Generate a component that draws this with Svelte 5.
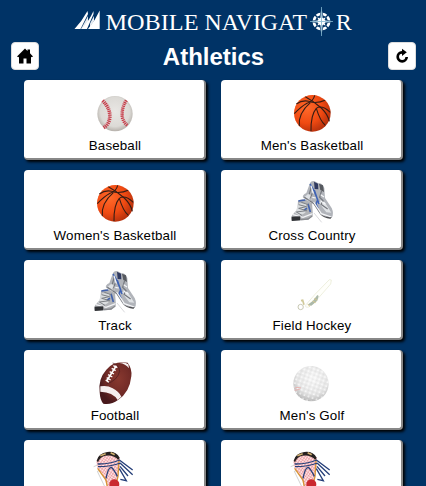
<script lang="ts">
  type Sport = { name?: string; icon: string };

  const sports: Sport[] = [
    { name: "Baseball", icon: "baseball" },
    { name: "Men's Basketball", icon: "basketball" },
    { name: "Women's Basketball", icon: "basketball" },
    { name: "Cross Country", icon: "shoes" },
    { name: "Track", icon: "shoes" },
    { name: "Field Hockey", icon: "hockey" },
    { name: "Football", icon: "football" },
    { name: "Men's Golf", icon: "golf" },
    { icon: "lacrosse" },
    { icon: "lacrosse" },
  ];
</script>

<div class="page">
  <header>
    <svg class="logo" width="280" height="32" viewBox="74 6 280 32" role="img" aria-label="Mobile Navigator">
      <g fill="#fff">
        <path d="M74.500 29 Q82 21 87.500 11 L88 14 L80.500 29Z" />
        <path d="M81.500 29 Q89 21 93.500 11 V14 L87 29Z" />
        <path d="M88 29 Q95 21 99.700 10.500 V29Z" />
        <path d="M84 23.500 L88 16 V22 L84.500 29 H81Z" opacity=".9" />
        <path d="M90 23.500 L94 16 V21 L90 27Z" opacity=".9" />
      </g>
      <text x="105.500" y="30" textLength="93" lengthAdjust="spacingAndGlyphs">MOBILE</text>
      <text x="204.500" y="30" textLength="102.500" lengthAdjust="spacingAndGlyphs">NAVIGAT</text>
      <text x="335.700" y="30">R</text>
      <circle cx="321.500" cy="21.500" r="7.600" fill="none" stroke="#fff" stroke-width="2.800" />
      <path d="M314 14 L329 29 M329 14 L314 29" stroke="#036" stroke-width="1.300" />
      <path d="M321.500 6.500 L323 18 L326 17 L325 20 L333.500 21.500 L325 23 L326 26 L323 25 L321.500 36 L320 25 L317 26 L318 23 L309.500 21.500 L318 20 L317 17 L320 18Z" fill="#fff" stroke="#036" stroke-width=".7" />
      <path d="M321.500 7 V21.500 H333 M321.500 36 V21.500 H310" fill="none" stroke="#7fb3cd" stroke-width=".8" />
    </svg>
    <div class="bar">
      <button aria-label="Home">
        <svg width="16" height="16" viewBox="0 0 16 16">
          <path d="M0 8.500 L8 .5 L10.500 3 V1.500 H13 V5.300 L16 8.500 L14.700 9.300 L14 8.700 V15.500 H9.500 V10.500 H6.500 V15.500 H2 V8.700 L1.300 9.300Z" />
        </svg>
      </button>
      <h1>Athletics</h1>
      <button aria-label="Refresh">
        <svg width="16" height="16" viewBox="0 0 16 16">
          <path d="M8.800 4.300 H8 A4.500 4.500 0 1 0 12.700 9" fill="none" stroke="#000" stroke-width="2.700" />
          <path d="M8 .8 L12.800 4.300 L8 8Z" />
        </svg>
      </button>
    </div>
  </header>

  <main>
    {#each sports as sport}
      <div class="card">
        <svg class="icon" width="60" height="50" viewBox="0 0 180 150">
          {#if sport.icon === "baseball"}
            <circle cx="90" cy="77" r="53" fill="url(#leather)" />
            <g fill="none">
              <path d="M53 38 Q80 65 73 96 Q69 111 56 119" stroke="#d2a2a5" stroke-width="3" />
              <path d="M53 38 Q80 65 73 96 Q69 111 56 119" stroke="#c83846" stroke-width="11" stroke-dasharray="3.500 2.500" />
              <path d="M124 37 Q109 60 112 88 Q116 104 128 113" stroke="#d2a2a5" stroke-width="3" />
              <path d="M124 37 Q109 60 112 88 Q116 104 128 113" stroke="#c83846" stroke-width="10" stroke-dasharray="3.500 2.500" />
            </g>
          {:else if sport.icon === "basketball"}
            <circle cx="91" cy="76" r="55" fill="url(#orange)" />
            <g fill="none" stroke="#351c14" stroke-width="3.200">
              <path d="M70 26 Q96 40 118 60 Q138 80 142 100" />
              <path d="M98 22 Q94 40 75 46 Q57 56 37 77" />
              <path d="M43 48 Q65 32 90 43 Q113 45 129 37" />
              <path d="M85 44 Q48 76 52 114" />
              <path d="M145 73 Q119 49 103 61 Q86 80 87 130" />
              <path d="M103 61 Q114 98 130 112" />
            </g>
          {:else if sport.icon === "shoes"}
            <path d="M84 15 Q89 7 98 10 L109 16 Q120 13 127 30 L129 60 L149 90 Q157 108 149 119 Q133 119 112 106 L93 76 L63 59 Q60 51 73 45Z" fill="#b1b4ba" />
            <path d="M78 48 L68 57 L84 66 L91 55Z M109 72 L133 103 L148 104 L128 72Z" fill="#dfe2e5" />
            <path d="M96 11 L108 17 L109 34 L98 33Z" fill="#303a60" />
            <path d="M111 17 L123 22 L126 42 L115 36Z" fill="#56595f" />
            <path d="M84 18 L96 38 L107 65 L102 78 L108 91 M97 37 L111 78" fill="none" stroke="#3e62b4" stroke-width="4.500" />
            <path d="M88 27 L82 48 M91 45 L84 64 M67 58 L96 77 L114 104 M119 37 L113 58 L123 68 L117 79 L137 93" fill="none" stroke="#74777d" stroke-width="3.500" />
            <path d="M87 23 L94 47 M91 58 L101 60 M116 50 L126 57 M115 68 L130 78 M95 72 L118 107 L148 117" fill="none" stroke="#f6f7f9" stroke-width="3.500" />
            <path d="M111 106 Q133 120 149 117 L146 122 Q128 123 111 106Z" fill="#4d4e52" />
            <path d="M48 69 Q54 62 72 65 L90 75 L93 112 L79 125 L32 129 Q24 122 31 111 L46 94Z" fill="#b1b3b7" />
            <path d="M51 76 L73 76 L70 104 L54 113 L39 105Z" fill="#dadddf" />
            <path d="M49 69 L70 66 M78 77 L85 102 M65 97 L75 91" fill="none" stroke="#4262ad" stroke-width="5" />
            <path d="M50 80 L73 86 L50 91 L74 98 L43 102 L60 112 M58 73 L79 80" fill="none" stroke="#7d8084" stroke-width="3" />
            <path d="M33 110 L63 118 L92 107" fill="none" stroke="#f2f3f5" stroke-width="4" />
            <path d="M29 116 L55 115 L55 127 L29 129Z" fill="#303235" />
            <path d="M57 125 L78 123 L91 114" fill="none" stroke="#898b8f" stroke-width="4" />
            <path d="M96 105 L119 133 M75 67 L90 65 L83 59" fill="none" stroke="#c5c5ca" stroke-width="2" />
          {:else if sport.icon === "hockey"}
            <path d="M148 36 L142 35 L99 79 L72 110 Q67 120 80 117 L104 96 L146 48Z" fill="#fffffb" stroke="#e5e7ce" stroke-width="2" />
            <path d="M106 81 L93 98 L77 110 L88 113 L106 98 L110 84Z" fill="#acb9a9" />
            <path d="M92 99 L101 104 M97 91 L105 97 M77 109 L84 115" stroke="#d9c88e" stroke-width="3" />
            <path d="M57 98 L62 97 L66 110" fill="none" stroke="#d0c998" stroke-width="5" />
            <circle cx="56" cy="117" r="8" fill="#fff" stroke="#c9c9b4" stroke-width="3" />
          {:else if sport.icon === "football"}
            <path d="M44 102 Q39 63 64 35 Q85 8 128 14 Q142 33 139 55 Q134 104 99 126 Q79 141 55 137 Q45 126 44 102Z" fill="url(#pigskin)" />
            <path d="M46 85 Q67 81 83 91 Q102 101 109 116 L98 126 Q84 102 46 101Z M104 15 Q121 17 132 31 L130 19 Q118 11 104 15Z" fill="#f5eeee" />
            <path d="M94 23 L65 69" stroke="#fff" stroke-width="5" />
            <path d="M85 23 L97 29 M80 31 L92 38 M74 41 L87 48 M69 50 L82 57 M65 59 L77 66 M62 66 L72 73" stroke="#fff" stroke-width="4" />
            <path d="M83 15 Q103 20 104 40 Q97 68 64 78" fill="none" stroke="#481b20" stroke-width="2" />
          {:else if sport.icon === "golf"}
            <circle cx="87" cy="77" r="53" fill="url(#golf-ball)" />
            <circle cx="87" cy="77" r="53" fill="url(#dimples)" />
            <path d="M38 91 L45 88 L57 90 M38 97 L53 94" fill="none" stroke="#e8b4b2" stroke-width="3" />
          {:else}
            <path d="M26 56 L49 46 L55 63 L37 70 L66 130 L52 150 M49 48 L105 35" fill="none" stroke="#bbb" stroke-width="2" />
            <path d="M34 41 Q40 19 63 14 Q87 7 105 30 L104 63 L91 117 H67 L59 92 L38 62Z" fill="#ffe1e1" />
            <path d="M34 41 Q40 19 63 14 Q87 7 105 30 L104 63 L91 117 H67 L59 92 L38 62Z" fill="url(#mesh)" />
            <path d="M35 38 Q41 15 67 12 Q93 9 104 29 L100 36 Q86 19 61 23 Q46 25 39 43Z" fill="#25201f" />
            <path d="M46 23 L62 17 M77 14 L89 20" stroke="#cfaf70" stroke-width="5" />
            <path d="M38 61 L63 96 L68 122 M102 35 L99 85 L91 118" fill="none" stroke="#d79536" stroke-width="4" />
            <path d="M38 48 Q73 49 104 36 M39 56 Q78 56 107 45 M63 91 Q70 57 79 58 Q87 65 97 85 M102 35 L143 66 M106 46 L143 80 M105 55 L129 84 M103 62 L124 98 L106 94" fill="none" stroke="#263f79" stroke-width="4" />
            <circle cx="88" cy="109" r="15" fill="#ca2930" />
            <path d="M74 116 H101 L95 170 H81Z" fill="#c97982" />
          {/if}
        </svg>
        {#if sport.name}<span>{sport.name}</span>{/if}
      </div>
    {/each}
  </main>

  <svg class="defs" width="0" height="0" aria-hidden="true">
    <defs>
      <radialGradient id="leather" cx=".5" cy=".45" r=".55">
        <stop offset="0" stop-color="#e9e7e4" />
        <stop offset=".75" stop-color="#dcdad6" />
        <stop offset="1" stop-color="#b5b0aa" />
      </radialGradient>
      <radialGradient id="orange" cx=".35" cy=".35" r=".7">
        <stop offset="0" stop-color="#ff6a2b" />
        <stop offset=".6" stop-color="#f04a12" />
        <stop offset="1" stop-color="#b5300c" />
      </radialGradient>
      <radialGradient id="pigskin" cx=".6" cy=".4" r=".6">
        <stop offset="0" stop-color="#88382f" />
        <stop offset=".65" stop-color="#702a26" />
        <stop offset="1" stop-color="#48191c" />
      </radialGradient>
      <radialGradient id="golf-ball" cx=".55" cy=".35" r=".65">
        <stop offset="0" stop-color="#f7f7f7" />
        <stop offset=".7" stop-color="#e5e5e5" />
        <stop offset="1" stop-color="#b8b8b8" />
      </radialGradient>
      <pattern id="dimples" width="13" height="12" patternUnits="userSpaceOnUse" patternTransform="rotate(20)">
        <circle cx="4" cy="4" r="3" fill="#cbcbcb" opacity=".35" />
        <circle cx="10" cy="10" r="3" fill="#fff" opacity=".7" />
      </pattern>
      <pattern id="mesh" width="7" height="7" patternUnits="userSpaceOnUse" patternTransform="rotate(35)">
        <path d="M0 0 H7 M0 0 V7" stroke="#df7e87" stroke-width="2.500" />
      </pattern>
    </defs>
  </svg>
</div>

<style>
  :global(body) {
    background: #036;
    overflow: hidden;
  }
  .page {
    box-sizing: border-box;
    width: 426px;
    height: 486px;
    overflow: hidden;
    background: #036;
    font-family: "Liberation Sans", Arial, sans-serif;
  }
  header {
    padding: 6px 10px 0 11px;
  }
  .logo {
    display: block;
    margin-left: 63px;
  }
  .logo text {
    fill: #fff;
    font-family: "Liberation Serif", "Times New Roman", serif;
    font-size: 24px;
  }
  .bar {
    display: flex;
    align-items: center;
    justify-content: space-between;
    height: 28px;
    margin-top: 4px;
  }
  h1 {
    margin: 0;
    padding-top: 2px;
    color: #fff;
    font-size: 24px;
    line-height: 28px;
  }
  button {
    display: flex;
    align-items: center;
    justify-content: center;
    width: 28px;
    height: 28px;
    padding: 0;
    border: 1px solid #ddd;
    border-radius: 4px;
    background: #fff;
  }
  main {
    display: grid;
    grid-template-columns: 182px 182px;
    gap: 10px 15px;
    padding: 10px 0 0 24px;
  }
  .card {
    box-sizing: border-box;
    display: flex;
    flex-direction: column;
    align-items: center;
    width: 182px;
    height: 80px;
    padding: 8px 0 0 2px;
    border: 2px solid #888;
    border-width: 0 2px 2px 0;
    border-radius: 4px;
    background: #fff;
    box-shadow: 2px 2px 3px #000;
  }
  .icon {
    flex: none;
  }
  .card span {
    font-size: 13.33px;
    line-height: 16px;
    letter-spacing: 0.15px;
    white-space: nowrap;
  }
  .defs {
    display: block;
  }
</style>
